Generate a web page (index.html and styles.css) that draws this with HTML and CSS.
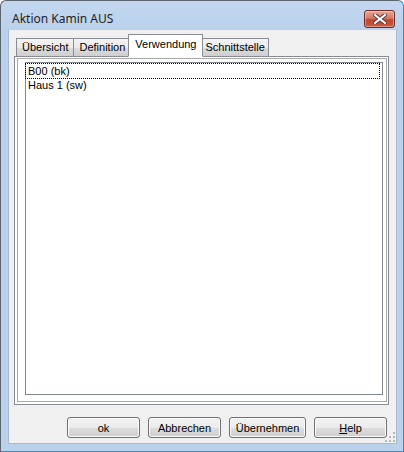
FILE: index.html
```html
<!DOCTYPE html>
<html>
<head>
<meta charset="utf-8">
<link rel="stylesheet" href="styles.css">
</head>
<body>
<div class="window">
  <div class="titlebar">
    <span class="title">Aktion Kamin AUS</span>
    <div class="close">
      <svg width="14" height="10" viewBox="0 0 14 10">
        <path d="M2 1 L12 9 M12 1 L2 9" stroke="#5a3a3a" stroke-width="4" stroke-linecap="square"/>
        <path d="M2 1 L12 9 M12 1 L2 9" stroke="#ffffff" stroke-width="2" stroke-linecap="square"/>
      </svg>
    </div>
  </div>
  <div class="client">
    <div class="tabs">
      <div class="tab">Übersicht</div>
      <div class="tab">Definition</div>
      <div class="tab active">Verwendung</div>
      <div class="tab tight">Schnittstelle</div>
    </div>
    <div class="panel">
      <div class="frame">
        <div class="listbox">
          <div class="item focus">B00 (bk)</div>
          <div class="item">Haus 1 (sw)</div>
        </div>
      </div>
    </div>
    <div class="buttons">
      <div class="btn">ok</div>
      <div class="btn">Abbrechen</div>
      <div class="btn wide">Übernehmen</div>
      <div class="btn"><u>H</u>elp</div>
    </div>
    <div class="grip">
      <svg width="10" height="10" viewBox="0 0 10 10">
        <g fill="#b8b8b8">
          <rect x="8" y="0" width="2" height="2"/>
          <rect x="4" y="4" width="2" height="2"/><rect x="8" y="4" width="2" height="2"/>
          <rect x="0" y="8" width="2" height="2"/><rect x="4" y="8" width="2" height="2"/><rect x="8" y="8" width="2" height="2"/>
        </g>
      </svg>
    </div>
  </div>
</div>
</body>
</html>
```
FILE: styles.css
```css
html, body {
  margin: 0;
  padding: 0;
  background: #ffffff;
}
body {
  width: 404px;
  height: 452px;
  font-family: "Liberation Sans", Arial, sans-serif;
  font-size: 11px;
  color: #000;
}
.window {
  box-sizing: border-box;
  width: 404px;
  height: 452px;
  border: 1px solid #5b6570;
  border-right-color: #1a9ad0;
  border-bottom-color: #1a9ad0;
  border-radius: 6px 6px 0 0;
  background: linear-gradient(to bottom, #c3d7ef 0px, #bad1ec 30px, #b9d1ea 100%);
  padding: 0 6px 7px 7px;
  display: flex;
  flex-direction: column;
}
.titlebar {
  height: 29px;
  display: flex;
  align-items: flex-start;
  justify-content: space-between;
}
.title {
  font-family: "Noto Sans", sans-serif;
  font-size: 12px;
  color: #1e1e1e;
  padding: 9px 0 0 4px;
}
.close {
  box-sizing: border-box;
  margin-top: 9px;
  margin-right: 2px;
  width: 31px;
  height: 18px;
  border: 1px solid #6d2a26;
  border-radius: 3px;
  background: linear-gradient(to bottom, #e8a493 0%, #d47b69 45%, #c0452f 55%, #c95d45 100%);
  display: flex;
  align-items: center;
  justify-content: center;
  box-shadow: inset 0 0 0 1px rgba(255,255,255,0.35);
}
.client {
  position: relative;
  flex: 1;
  background: #f0f0f0;
  display: flex;
  flex-direction: column;
  padding: 4px 4px 0 5px;
  border: 1px solid #a8bad0;
  border-top: none;
}
.tabs {
  display: flex;
  align-items: flex-end;
  height: 22px;
  padding-left: 2px;
  position: relative;
  z-index: 1;
}
.tab {
  box-sizing: border-box;
  height: 18px;
  padding: 2px 5px 0 5px;
  border: 1px solid #898c95;
  border-bottom: none;
  margin-right: -1px;
  background: linear-gradient(to bottom, #f3f3f3 0%, #ebebeb 50%, #dddddd 51%, #cfcfcf 100%);
  white-space: nowrap;
}
.tab.tight {
  padding: 2px 3px 0 3px;
}
.tab.active {
  background: #ffffff;
  padding: 3px 5px 0 6px;
  margin: 0 -1px -1px -2px;
  position: relative;
  z-index: 2;
  border-bottom: 1px solid #ffffff;
  height: 23px;
}
.panel {
  box-sizing: border-box;
  width: 375px;
  height: 349px;
  border: 1px solid #898c95;
  background: #ffffff;
  padding: 1px 1px 2px 2px;
  display: flex;
}
.frame {
  flex: 1;
  display: flex;
  border: 1px solid #a9a9a9;
  padding: 3px 3px 6px 7px;
}
.listbox {
  flex: 1;
  box-sizing: border-box;
  border: 1px solid #828790;
  background: #fff;
  padding: 1px 3px 0 0;
}
.item {
  height: 14px;
  line-height: 14px;
  padding-left: 2px;
}
.item.focus {
  outline: 1px dotted #000;
  outline-offset: 0px;
}
.buttons {
  display: flex;
  gap: 8px;
  margin-top: 12px;
  padding-left: 53px;
}
.btn {
  box-sizing: border-box;
  width: 73px;
  height: 21px;
  border: 1px solid #707070;
  border-radius: 3px;
  background: linear-gradient(to bottom, #f2f2f2 0%, #ebebeb 50%, #dddddd 51%, #cfcfcf 100%);
  box-shadow: inset 0 0 0 1px #fcfcfc;
  display: flex;
  align-items: center;
  justify-content: center;
}
.btn.wide {
  width: 77px;
}
.grip {
  position: absolute;
  right: 1px;
  bottom: 1px;
  line-height: 0;
}
```
